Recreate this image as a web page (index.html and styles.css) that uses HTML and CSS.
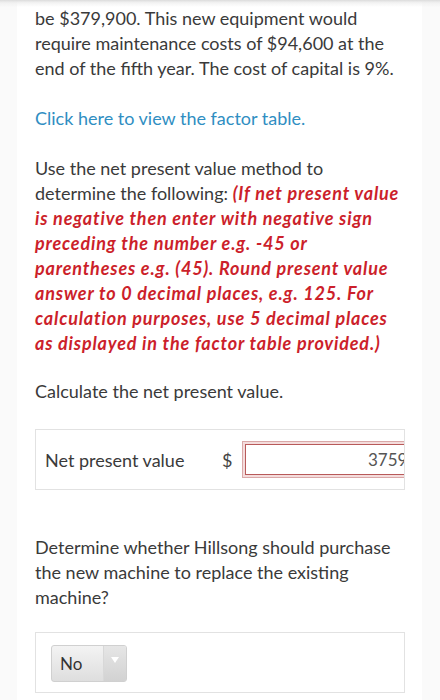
FILE: index.html
```html
<!DOCTYPE html>
<html>
<head>
<meta charset="utf-8">
<link rel="stylesheet" href="styles.css">
</head>
<body>
<div class="topshade"></div>
<main class="page">
  <p class="para">be $379,900. This new equipment would require maintenance costs of $94,600 at the end of the fifth year. The cost of capital is 9%.</p>
  <p class="para"><a class="link" href="#">Click here to view the factor table.</a></p>
  <p class="para instructions">Use the net present value method to determine the following: <em class="warn">(If net present value is negative then enter with negative sign preceding the number e.g. -45 or parentheses e.g. (45). Round present value answer to 0 decimal places, e.g. 125. For calculation purposes, use 5 decimal places as displayed in the factor table provided.)</em></p>
  <p class="para">Calculate the net present value.</p>
  <div class="box answer">
    <span class="label">Net present value</span>
    <span class="dollar">$</span>
    <input class="amount" type="text" value="3759">
  </div>
  <p class="para determine">Determine whether Hillsong should purchase the new machine to replace the existing machine?</p>
  <div class="box choice">
    <div class="select">
      <span class="select-text">No</span>
      <span class="select-arrow"><span class="tri"></span></span>
    </div>
  </div>
</main>
</body>
</html>
```

FILE: styles.css
```css
html, body {
  margin: 0;
  padding: 0;
}
body {
  background: #fafafa;
  font-family: Lato, "Open Sans", sans-serif;
  color: #3a3a3a;
}
.topshade {
  position: fixed;
  top: 0;
  left: 0;
  right: 0;
  height: 7px;
  background: linear-gradient(#dcdcdc, rgba(235,235,235,0.6) 40%, rgba(255,255,255,0));
  z-index: 5;
}
.page {
  margin: 0 18px 0 17px;
  background: #fff;
  padding: 6px 17px 20px 18px;
  min-height: 700px;
  box-sizing: border-box;
}
.para {
  margin: 0 0 25px;
  font-size: 18px;
  line-height: 25px;
}
.instructions {
  margin-bottom: 23px;
}
.link {
  color: #2f8ec2;
  text-decoration: none;
}
.warn {
  color: #cc1f2b;
  font-weight: bold;
  font-style: italic;
  letter-spacing: 0.82px;
}
.box {
  border: 1px solid #e2e2e2;
  display: flex;
  align-items: center;
  overflow: hidden;
}
.answer {
  padding: 14px 0 14px 9px;
  margin-bottom: 45px;
}
.label {
  font-size: 18px;
  width: 177px;
  flex: none;
}
.dollar {
  font-size: 18px;
  color: #444;
  margin-right: 13px;
  flex: none;
}
.amount {
  flex: none;
  width: 170px;
  height: 31px;
  box-sizing: border-box;
  border: 1px solid #b85a5a;
  box-shadow: 0 0 0 2px #f4dcdc, 0 0 0 3px #d9a8a8;
  font-family: Lato, sans-serif;
  font-size: 17px;
  color: #555;
  text-align: right;
  padding: 0 7px 0 6px;
  margin: 0;
  outline: none;
}
.determine {
  margin-bottom: 22px;
}
.choice {
  padding: 12px 0 10px 15px;
}
.select {
  display: flex;
  width: 76px;
  height: 37px;
  box-sizing: border-box;
  border: 1px solid #d0d0d0;
  border-radius: 3px;
  background: linear-gradient(#f3f3f3, #dedede);
  overflow: hidden;
}
.select-text {
  flex: 1;
  font-size: 17px;
  color: #333;
  padding-left: 8px;
  line-height: 35px;
}
.select-arrow {
  width: 23px;
  flex: none;
  background: linear-gradient(#e6e6e6, #d2d2d2);
  border-left: 1px solid #d8d8d8;
  display: flex;
  justify-content: center;
  padding-top: 11px;
  box-sizing: border-box;
}
.tri {
  width: 0;
  height: 0;
  border-left: 4px solid transparent;
  border-right: 4px solid transparent;
  border-top: 6px solid #fff;
}
```
